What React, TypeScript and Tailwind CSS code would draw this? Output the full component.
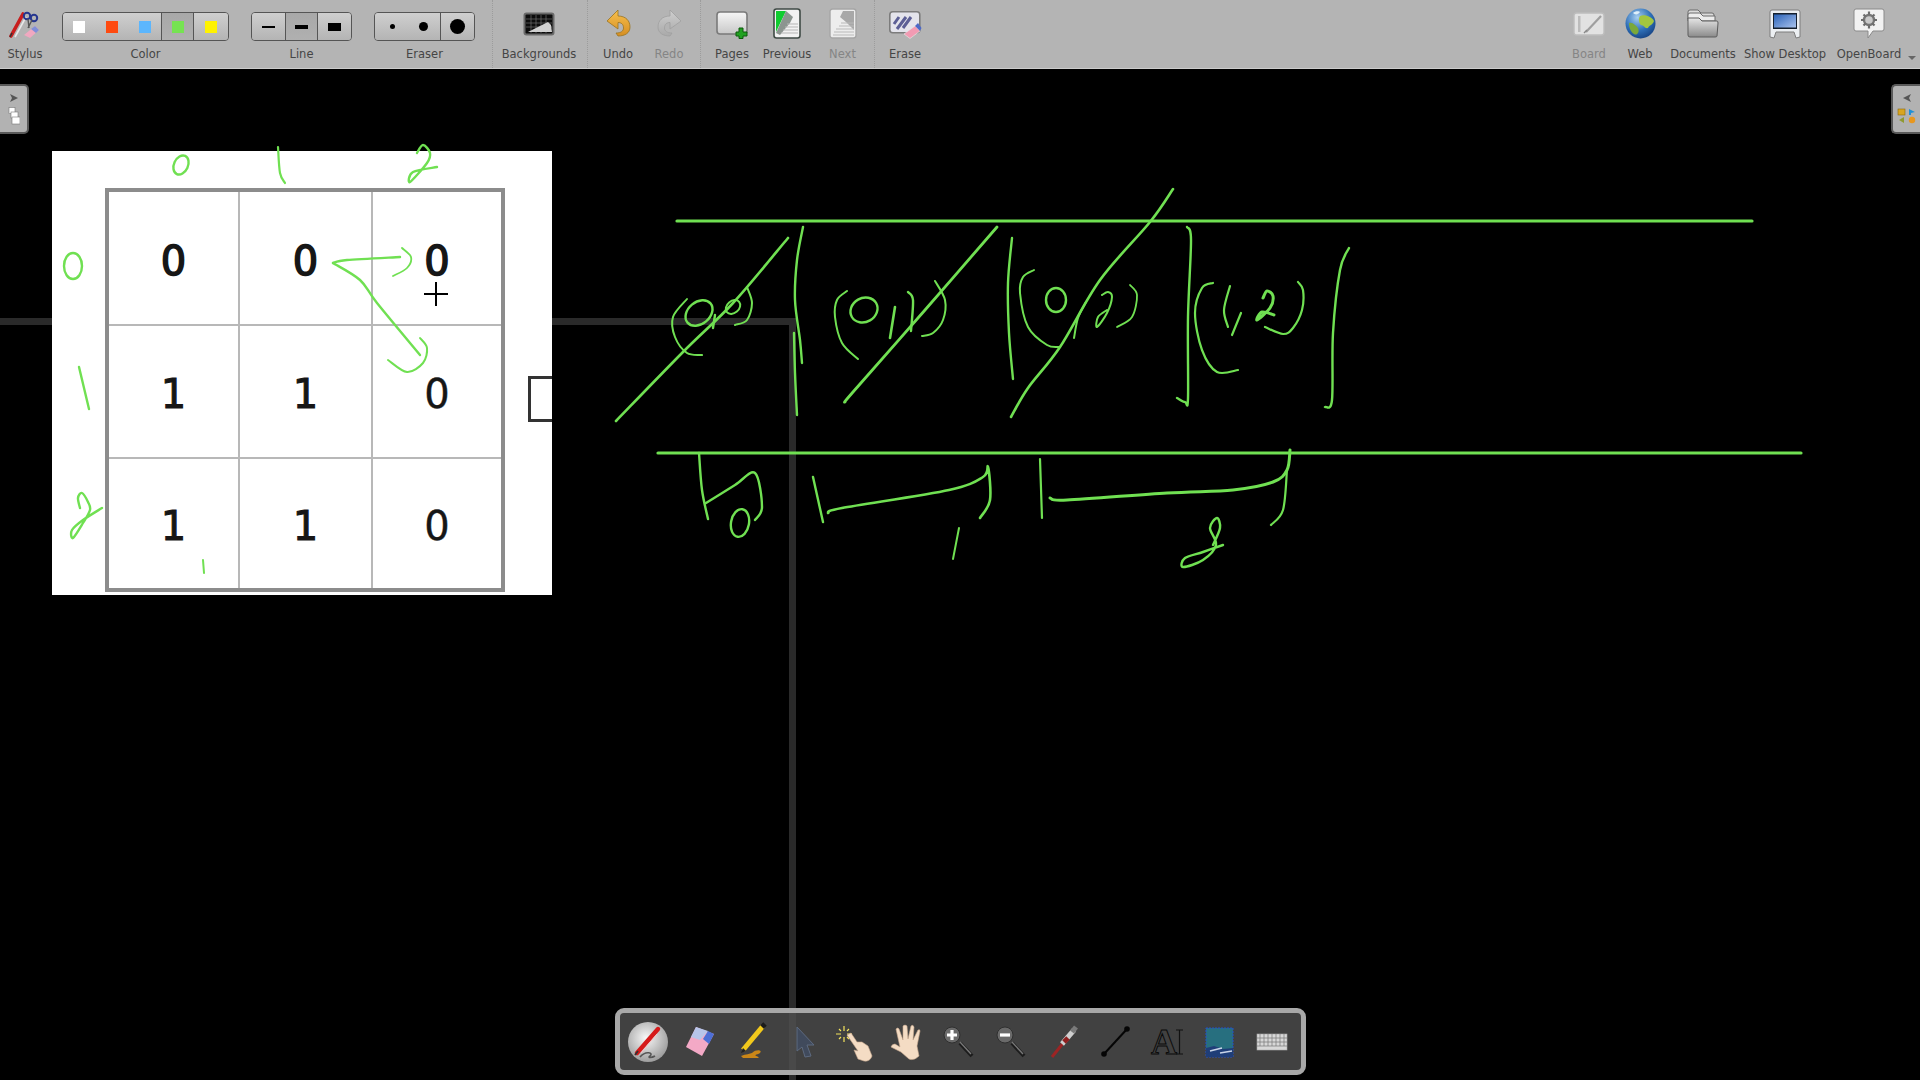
import React from "react";

type P = [number, number];
const smooth = (p: P[]) => {
  let d = `M${p[0][0]} ${p[0][1]}`;
  for (let i = 0; i < p.length - 1; i++) {
    const a = p[Math.max(i - 1, 0)], b = p[i], c = p[i + 1], e = p[Math.min(i + 2, p.length - 1)];
    d += ` C${b[0] + (c[0] - a[0]) / 6} ${b[1] + (c[1] - a[1]) / 6} ${c[0] - (e[0] - b[0]) / 6} ${c[1] - (e[1] - b[1]) / 6} ${c[0]} ${c[1]}`;
  }
  return d;
};

const strokes: [P[], number][] = [
  [[[677, 221], [1752, 221]], 3.2],
  [[[658, 453], [1801, 453]], 3.2],
  [[[616, 421], [683, 352], [733, 303], [788, 238]], 2.6],
  [[[803, 227], [797, 260], [795, 300], [800, 340], [802, 363]], 2.4],
  [[[794, 333], [795, 373], [797, 415]], 2.4],
  [[[687, 299], [673, 317], [675, 337], [687, 353], [702, 355]], 2],
  [[[715, 315], [713, 328]], 2.4],
  [[[747, 287], [752, 303], [747, 320], [735, 325]], 2],
  [[[845, 402], [853, 392], [925, 310], [997, 227]], 2.8],
  [[[847, 291], [837, 300], [835, 317], [842, 343], [858, 359]], 2],
  [[[895, 307], [890, 338]], 2.6],
  [[[908, 292], [913, 300], [911, 331]], 2.4],
  [[[935, 281], [945, 300], [943, 320], [933, 333], [922, 336]], 2],
  [[[1012, 238], [1008, 283], [1009, 333], [1013, 379]], 2.4],
  [[[1034, 270], [1023, 277], [1020, 293], [1028, 327], [1047, 345], [1060, 347]], 2],
  [[[1011, 417], [1028, 388], [1060, 347], [1100, 280], [1150, 222], [1173, 189]], 2.6],
  [[[1086, 302], [1078, 318], [1074, 338]], 2],
  [[[1102, 295], [1108, 292], [1112, 297], [1107, 313], [1097, 327], [1098, 317], [1107, 310]], 2],
  [[[1130, 285], [1137, 295], [1132, 317], [1117, 327]], 1.8],
  [[[1187, 227], [1191, 240], [1188, 317], [1188, 398], [1185, 402], [1177, 398]], 2.4],
  [[[1213, 283], [1202, 288], [1195, 313], [1202, 350], [1217, 372], [1238, 370]], 2.2],
  [[[1230, 286], [1224, 310], [1228, 327]], 2.2],
  [[[1241, 313], [1232, 335]], 2.2],
  [[[1263, 298], [1267, 291], [1273, 296], [1270, 308], [1257, 320], [1262, 312], [1274, 315]], 3],
  [[[1298, 282], [1303, 290], [1302, 310], [1293, 328], [1283, 334], [1265, 327]], 2.2],
  [[[1349, 248], [1340, 270], [1333, 333], [1332, 400], [1325, 407]], 2.4],
  [[[699, 453], [702, 490], [708, 519]], 2.4],
  [[[706, 503], [735, 485], [755, 473], [762, 507], [755, 520]], 2.4],
  [[[813, 477], [823, 522]], 2.4],
  [[[828, 513], [842, 508], [949, 490], [983, 477], [988, 467], [990, 500], [980, 518]], 2.6],
  [[[959, 528], [953, 559]], 2],
  [[[1040, 459], [1042, 518]], 2.2],
  [[[1050, 498], [1067, 500], [1167, 493], [1233, 490], [1273, 482], [1287, 470], [1290, 450]], 3],
  [[[1287, 470], [1283, 510], [1271, 525]], 2.2],
  [[[1213, 545], [1220, 528], [1217, 518], [1210, 528], [1216, 545], [1203, 560], [1183, 567], [1185, 558], [1203, 552], [1223, 545]], 2.4],
  [[[278, 147], [280, 173], [285, 183]], 2.2],
  [[[417, 153], [423, 145], [430, 153], [427, 163], [410, 182], [413, 172], [437, 167]], 2.4],
  [[[79, 367], [89, 409]], 2.4],
  [[[80, 508], [78, 498], [82, 493], [88, 502], [90, 510], [83, 523], [73, 538], [72, 530], [83, 520], [102, 508]], 2.4],
  [[[203, 560], [204, 573]], 2],
  [[[333, 263], [347, 260], [400, 257]], 2.4],
  [[[402, 248], [411, 257], [407, 268], [393, 276]], 1.8],
  [[[333, 263], [360, 280], [377, 303], [420, 355]], 2.4],
  [[[420, 338], [427, 348], [423, 363], [407, 372], [388, 360]], 2],
];

const ellipses: [number, number, number, number, number, number][] = [
  [699, 313, 15, 11, -40, 2.4],
  [733, 307, 8, 6, -40, 2],
  [864, 310, 14, 12, -30, 2.4],
  [1056, 300, 10, 12, 0, 2.4],
  [181, 165, 7, 10, 25, 2.4],
  [73, 266, 9, 13, 0, 2.4],
  [740, 523, 9, 14, 10, 2.4],
];

const Sketch = () => (
  <svg className="absolute left-0 top-0" width="1920" height="1080" fill="none" stroke="#70e052" strokeLinecap="round" strokeLinejoin="round">
    {strokes.map(([p, w], i) => <path key={i} d={smooth(p)} strokeWidth={w} />)}
    {ellipses.map(([x, y, rx, ry, r, w], i) => (
      <ellipse key={i} cx={x} cy={y} rx={rx} ry={ry} strokeWidth={w} transform={`rotate(${r} ${x} ${y})`} />
    ))}
    <path d="M436 282V306M424 294H448" stroke="#000" strokeWidth="2" strokeLinecap="butt" />
  </svg>
);

const Item = ({ w, label, dim, children }: { w: string; label: string; dim?: boolean; children?: React.ReactNode }) => (
  <div className={`${w} flex flex-col items-center pt-[6px] shrink-0`}>
    <div className="h-[35px] flex items-center justify-center">{children}</div>
    <div className={`mt-[6px] h-[14px] leading-[14px] text-[11.5px] whitespace-nowrap ${dim ? "text-[#858585]" : "text-[#454545]"}`}>{label}</div>
  </div>
);

const Group = ({ w, ml, label, children }: { w: string; ml: string; label: string; children: React.ReactNode }) => (
  <div className={`${w} ${ml} flex flex-col items-center shrink-0`}>
    <div className="w-full h-[29px] mt-[12px] flex rounded-[4px] border border-[#555] overflow-hidden">{children}</div>
    <div className="mt-[6px] h-[14px] leading-[14px] text-[11.5px] text-[#454545]">{label}</div>
  </div>
);

const seg = "flex items-center justify-center bg-gradient-to-b from-[#cfcfcf] to-[#b4b4b4]";
const segSel = "flex items-center justify-center bg-gradient-to-b from-[#a8a8a8] to-[#b0b0b0]";

const Sep = ({ ml }: { ml: string }) => <div className={`${ml} w-px h-[68px] shrink-0 border-l border-dotted border-[#9c9c9c]`} />;

const StylusIcon = () => (
  <svg width="32" height="30" viewBox="0 0 32 30">
    <path d="M2 27 L14 5" stroke="#c81e1e" strokeWidth="3.6" strokeLinecap="round" />
    <path d="M6 28 L17 8" stroke="#e8e8e8" strokeWidth="1.6" />
    <path d="M1 28 L3 24" stroke="#333" strokeWidth="1.6" />
    <circle cx="18" cy="7" r="3.2" fill="none" stroke="#26368f" strokeWidth="2" />
    <circle cx="25" cy="9" r="3.2" fill="none" stroke="#26368f" strokeWidth="2" />
    <path d="M19 10 L20 19 M23 11 L19 19" stroke="#555" strokeWidth="1.4" />
    <path d="M15 26 L26 17 L30 21 L21 29 Z" fill="#f0a8c0" />
    <path d="M22 20 L26 17 L30 21 L27 24 Z" fill="#7f8fd8" />
  </svg>
);

const BackgroundsIcon = () => (
  <svg width="32" height="24" viewBox="0 0 32 24">
    <rect x="0.5" y="0.5" width="31" height="23" rx="3" fill="#6a6a6a" />
    <rect x="2.5" y="2.5" width="27" height="19" rx="1" fill="#0c0c0c" />
    <path d="M3 7H29M3 11H29M3 15H29M8 3V21M13 3V21M18 3V21M23 3V21" stroke="#6e6e6e" strokeWidth="0.7" />
    <path d="M5 20 L25 10 L28 13 L29 20 Z" fill="#d0d0d0" />
  </svg>
);

const ArrowIcon = ({ id, a, b, s, flip }: { id: string; a: string; b: string; s: string; flip?: boolean }) => (
  <svg width="25" height="28" viewBox="0 0 25 28" className="-mt-[2px]">
    <defs><linearGradient id={id} x1="0" y1="0" x2="0" y2="1"><stop offset="0" stopColor={a} /><stop offset="1" stopColor={b} /></linearGradient></defs>
    <g transform={flip ? "translate(25 0) scale(-1 1)" : undefined}>
      <path d="M1 12 L12 1 L12 7 C20 7 24 12 24 18 C24 24 19 27 12 27 L10 24 C15 24 17.5 22 17.5 19 C17.5 15 15 13.5 12 13.5 L12 20 Z" fill={`url(#${id})`} stroke={s} strokeWidth="0.8" />
    </g>
  </svg>
);

const PagesIcon = () => (
  <svg width="33" height="28" viewBox="0 0 33 28" className="mt-[3px]">
    <defs><linearGradient id="pg" x1="0" y1="0" x2="0" y2="1"><stop offset="0" stopColor="#f6f6f6" /><stop offset="1" stopColor="#c8c8c8" /></linearGradient></defs>
    <rect x="1" y="1" width="30" height="22" rx="3" fill="url(#pg)" stroke="#7a7a7a" strokeWidth="1.6" />
    <path d="M23 17H27V21H31V25H27V27.5H23V25H20V21H23Z" fill="#22a122" stroke="#0c5a0c" strokeWidth="1" />
  </svg>
);

const PreviousIcon = () => (
  <svg width="28" height="31" viewBox="0 0 28 31">
    <rect x="1" y="1" width="26" height="29" rx="2.5" fill="#f2f2f2" stroke="#3f4a45" strokeWidth="1.6" />
    <path d="M3 3H13L3 24Z" fill="#10cc30" />
    <path d="M13 3 L20 9 L17 15 L7 27 L3 25 Z" fill="#8c9590" />
    <path d="M14 16H25M12 19H25M10 22H25M8 25H25" stroke="#b5b5b5" strokeWidth="1" />
  </svg>
);

const NextIcon = () => (
  <svg width="28" height="31" viewBox="0 0 28 31">
    <rect x="1" y="1" width="26" height="29" rx="2.5" fill="#ededed" stroke="#a6a6a6" strokeWidth="1.4" />
    <path d="M14 3H25V22 L17 14 L11 9 Z" fill="#a8a8a8" />
    <path d="M12 15H25M10 18H25M7 21H25M5 24H25M4 27H25" stroke="#b9b9b9" strokeWidth="1" />
  </svg>
);

const EraseIcon = () => (
  <svg width="33" height="28" viewBox="0 0 33 28" className="mt-[3px]">
    <rect x="0.8" y="0.8" width="30" height="21" rx="3" fill="#e4e4ec" stroke="#7c7c7c" strokeWidth="1.6" />
    <path d="M5 13 L10 6 M8 18 L17 6 M14 17 L22 6" stroke="#5c5f96" strokeWidth="3" />
    <path d="M15 23 L26 15 L31 20 L21 27.5 Z" fill="#f29bb3" stroke="#e9e9e9" strokeWidth="0.6" />
    <path d="M26 15 L29 12 L32.5 17 L31 20 Z" fill="#4d69c6" />
  </svg>
);

const BoardIcon = () => (
  <svg width="32" height="24" viewBox="0 0 32 24">
    <rect x="1" y="1" width="30" height="22" rx="2.5" fill="#e2e2e2" stroke="#bdbdbd" strokeWidth="1.4" />
    <rect x="5" y="4" width="2.5" height="16" fill="#bcbcbc" />
    <path d="M13 20 L28 4" stroke="#9f9f9f" strokeWidth="2.2" />
    <path d="M11 21 L14 18" stroke="#888" strokeWidth="1.4" />
  </svg>
);

const WebIcon = () => (
  <svg width="31" height="31" viewBox="0 0 31 31">
    <defs><radialGradient id="gl" cx="0.4" cy="0.3" r="0.8"><stop offset="0" stopColor="#a8cff0" /><stop offset="0.55" stopColor="#2e6fb8" /><stop offset="1" stopColor="#123a78" /></radialGradient></defs>
    <circle cx="15.5" cy="15.5" r="15" fill="url(#gl)" />
    <path d="M15 8 C20 6 27 9 29 13 C28 17 24 17 23 20 C20 21 19 17 16 17 C14 15 13 11 15 8Z" fill="#a2c640" />
    <path d="M4 15 C8 14 11 18 13 20 C15 24 12 28 9 26 C6 24 4 20 4 15Z" fill="#7aa83a" />
    <path d="M8 5 C10 3 14 3 15 4 C13 7 10 7 8 5Z" fill="#dfeffa" />
  </svg>
);

const DocumentsIcon = () => (
  <svg width="32" height="29" viewBox="0 0 32 29">
    <defs><linearGradient id="fd" x1="0" y1="0" x2="0" y2="1"><stop offset="0" stopColor="#e6e6e6" /><stop offset="1" stopColor="#8a8a8a" /></linearGradient></defs>
    <path d="M1 3 Q1 1 3 1 H11 L14 4 H25 Q27 4 27 6 V10 H1Z" fill="#dcdcdc" stroke="#6a6a6a" />
    <path d="M1 6 Q1 4 3 4 H13 L16 7 H28 V12 H1Z" fill="#ececec" stroke="#6a6a6a" />
    <path d="M1 9 H12 L15 12 H30 Q31 12 31 14 L30 27 Q30 28 28 28 H3 Q1 28 1 26Z" fill="url(#fd)" stroke="#5c5c5c" />
  </svg>
);

const DesktopIcon = () => (
  <svg width="32" height="30" viewBox="0 0 32 30">
    <defs><linearGradient id="ds" x1="0" y1="0" x2="1" y2="1"><stop offset="0" stopColor="#2a62b8" /><stop offset="1" stopColor="#a9c3ee" /></linearGradient></defs>
    <path d="M3 1 H29 Q31 1 31 3 V28 L27 29 L25 23 H7 L5 29 L1 28 V3 Q1 1 3 1Z" fill="#eceff2" stroke="#7d7d7d" />
    <rect x="4" y="4" width="24" height="16" fill="#15202e" />
    <rect x="5" y="5.5" width="22" height="13" fill="url(#ds)" />
  </svg>
);

const OpenBoardIcon = () => (
  <svg width="32" height="31" viewBox="0 0 32 31">
    <path d="M3 1 H29 Q31 1 31 3 V21 Q31 23 29 23 H20 L15 30 L15 23 H3 Q1 23 1 21 V3 Q1 1 3 1Z" fill="#f2f2f2" stroke="#8a8a8a" />
    <circle cx="16" cy="12" r="5" fill="#c9c9c9" stroke="#767676" strokeWidth="2.4" />
    <path d="M16 3.5V6.5M16 17.5V20.5M8 12H11M21 12H24M10.5 6.5L12.5 8.5M19.5 15.5L21.5 17.5M21.5 6.5L19.5 8.5M12.5 15.5L10.5 17.5" stroke="#6d6d6d" strokeWidth="2.2" />
  </svg>
);

const LeftTab = () => (
  <div className="absolute left-0 top-[15px] w-[29px] h-[50px] bg-[#b2b2b2] border-2 border-l-0 border-[#5a5a5a] rounded-r-[5px] flex flex-col items-center gap-[4px] pt-[7px]">
    <svg width="10" height="10" viewBox="0 0 10 10"><path d="M1 1 L9 5 L1 9 L3 5Z" fill="#555" /></svg>
    <svg width="12" height="18" viewBox="0 0 12 18">
      <rect x="1" y="0.5" width="6" height="6" fill="#fff" stroke="#777" strokeWidth="0.6" />
      <rect x="3" y="5" width="7" height="6" fill="#fff" stroke="#777" strokeWidth="0.6" />
      <rect x="4" y="10" width="8" height="7" fill="#fff" stroke="#777" strokeWidth="0.6" />
    </svg>
  </div>
);

const RightTab = () => (
  <div className="absolute right-0 top-[15px] w-[29px] h-[50px] bg-[#b2b2b2] border-2 border-r-0 border-[#5a5a5a] rounded-l-[5px] flex flex-col items-center gap-[5px] pt-[7px]">
    <svg width="10" height="10" viewBox="0 0 10 10"><path d="M9 1 L1 5 L9 9 L7 5Z" fill="#555" /></svg>
    <svg width="20" height="16" viewBox="0 0 20 16">
      <rect x="1" y="1" width="7" height="6" fill="#d9a520" stroke="#8a6a10" strokeWidth="0.6" />
      <path d="M12 1 L18 4 L14 5 V7 H12Z" fill="#1e90d8" />
      <path d="M7 9 L2 12 L7 15Z" fill="#8f9a30" />
      <circle cx="15" cy="12" r="3.2" fill="#e8971e" />
    </svg>
  </div>
);

const Z = ({ minus }: { minus?: boolean }) => (
  <svg width="44" height="44" viewBox="0 0 44 44">
    <circle cx={minus ? 15 : 14} cy="15" r="8" fill="#6a6a6a" stroke="#2f2f2f" />
    <path d={minus ? "M10 15H20" : "M9 15H19M14 10V20"} stroke="#fff" strokeWidth="3.2" />
    <path d="M22 23 L34 36" stroke="#1c1c1c" strokeWidth="4" />
    <path d="M22 22 L33 34" stroke="#777" strokeWidth="1.4" />
  </svg>
);

const bottomIcons: React.ReactNode[] = [
  <svg key="a" width="44" height="44" viewBox="0 0 44 44">
    <defs><radialGradient id="bc" cx="0.45" cy="0.4" r="0.7"><stop offset="0" stopColor="#f8f8f8" /><stop offset="1" stopColor="#8f8f8f" /></radialGradient></defs>
    <circle cx="22" cy="22" r="20" fill="url(#bc)" />
    <path d="M11 33 L32 9" stroke="#d61a1a" strokeWidth="4.4" strokeLinecap="round" />
    <path d="M15 33 L31 14" stroke="#f3c6c6" strokeWidth="1" />
    <path d="M9 35 L12 31" stroke="#333" strokeWidth="1.8" />
    <path d="M14 37 C20 30 28 33 24 36 C21 38 26 38 29 36" stroke="#555" strokeWidth="1.6" fill="none" />
  </svg>,
  <svg key="b" width="44" height="44" viewBox="0 0 44 44">
    <path d="M8 27 L18 7 L36 14 L24 36 Z" fill="#f3a9c6" />
    <path d="M18 7 L30 11 L22 20 L13 17 Z" fill="#b7c5ea" />
    <path d="M30 11 L36 14 L31 24 L25 19 Z" fill="#4d6fd6" />
  </svg>,
  <svg key="c" width="44" height="44" viewBox="0 0 44 44">
    <path d="M13 30 L33 6" stroke="#f2c91c" strokeWidth="5" />
    <path d="M32 7 L35 4" stroke="#1b1b1b" strokeWidth="5" />
    <path d="M11 33 L13 28 L16 31Z" fill="#222" />
    <path d="M11 36 C16 34 20 34 22 33 C26 29 33 30 30 33 C28 35 24 34 26 36 C29 37 30 38 27 38 L13 38 Z" fill="#c98618" />
  </svg>,
  <svg key="d" width="44" height="44" viewBox="0 0 44 44">
    <path d="M15 7 L32 25 L25 25 L29 36 L23 37 L20 27 L15 31 Z" fill="#404a5c" stroke="#5d6a80" strokeWidth="1" />
  </svg>,
  <svg key="e" width="44" height="44" viewBox="0 0 44 44">
    <path d="M10 6V11M10 17V22M2 14H7M13 14H18M5 9L7 11M15 9L13 11M5 19L7 17M15 19L13 17" stroke="#f3e35c" strokeWidth="1.2" />
    <path d="M13 15 L17 13 L23 22 L28 22 L34 26 L38 36 Q36 42 30 41 L24 39 L20 30 L24 31 Z" fill="#f4dcc4" stroke="#c9a98f" strokeWidth="0.6" />
  </svg>,
  <svg key="f" width="44" height="44" viewBox="0 0 44 44">
    <path d="M14 27 L10 9 Q12 7 13 9 L17 20 L17 6 Q19 4 21 6 L22 19 L25 6 Q27 4 28 7 L27 20 L32 10 Q34 9 34 11 L31 26 L33 36 Q28 41 23 39 L15 32 L5 27 Q6 24 9 24Z" fill="#f4dcc4" stroke="#c9a98f" strokeWidth="0.6" />
  </svg>,
  <Z key="g" />,
  <Z key="h" minus />,
  <svg key="i" width="44" height="44" viewBox="0 0 44 44">
    <path d="M10 37 L22 22" stroke="#9c2424" strokeWidth="3" />
    <path d="M20 24 L32 10" stroke="#cfcfcf" strokeWidth="5" />
    <path d="M22 22 L26 18" stroke="#8e2020" strokeWidth="5" />
    <path d="M30 12 L34 7" stroke="#7a7a7a" strokeWidth="5" />
  </svg>,
  <svg key="j" width="44" height="44" viewBox="0 0 44 44">
    <path d="M10 34 L33 9" stroke="#050505" strokeWidth="2" />
    <circle cx="10" cy="34" r="2.8" fill="#050505" />
    <circle cx="33" cy="9" r="2.8" fill="#050505" />
  </svg>,
  <div key="k" className="relative w-[34px] h-[30px] flex items-center">
    <span className="text-[36px] leading-[30px] font-bold text-transparent [-webkit-text-stroke:1px_#0a0a0a] [font-family:'Liberation_Serif',serif]">A</span>
    <svg className="absolute right-[1px] top-[2px]" width="9" height="26" viewBox="0 0 9 26"><path d="M1 1H8M4.5 1V25M1 25H8" stroke="#111" strokeWidth="1.2" fill="none" /></svg>
  </div>,
  <svg key="l" width="44" height="44" viewBox="0 0 44 44">
    <rect x="8" y="8" width="27" height="29" fill="#276f7f" stroke="#2550c8" strokeWidth="1" strokeDasharray="2 1" />
    <path d="M8 37 L8 28 L16 26 L25 29 L35 28 L35 37Z" fill="#1f3e78" />
    <path d="M12 31 L24 28 M22 33 L34 31" stroke="#c8d4e8" strokeWidth="1.4" />
  </svg>,
  <svg key="m" width="44" height="44" viewBox="0 0 44 44">
    <rect x="7" y="14" width="30" height="16" fill="#d8d8d8" stroke="#aaa" strokeWidth="0.6" />
    <path d="M7 18H37M7 22H37M7 26H37M10 14V26M14 14V26M18 14V26M22 14V26M26 14V26M30 14V26M34 14V26" stroke="#777" strokeWidth="0.7" />
  </svg>,
];

const Cell = ({ weight, t, br, bb }: { weight: string; t: string; br?: boolean; bb?: boolean }) => (
  <div className={`flex items-center justify-center pt-[5px] text-[40px] leading-none text-[#161616] [font-family:'DejaVu_Sans',sans-serif] ${weight} ${br ? "border-r-2 border-r-[#b8b8b8]" : ""} ${bb ? "border-b-2 border-b-[#b8b8b8]" : ""}`}>{t}</div>
);

const heavy = "[-webkit-text-stroke:1.5px_#161616]";
const mid = "[-webkit-text-stroke:1px_#161616]";
const light = "[-webkit-text-stroke:0.4px_#161616]";

export default function App() {
  return (
    <div className="relative w-[1920px] h-[1080px] bg-black overflow-hidden flex flex-col [font-family:'DejaVu_Sans',sans-serif]">
      <header className="h-[69px] shrink-0 bg-[#b4b4b4] border-b border-[#cccccc] flex items-start">
        <Item w="w-[50px]" label="Stylus"><StylusIcon /></Item>
        <Group w="w-[167px]" ml="ml-[12px]" label="Color">
          <div className={`${seg} w-[99px] gap-[21px] border-r border-[#555]`}>
            <div className="w-[12px] h-[12px] bg-white" />
            <div className="w-[12px] h-[12px] bg-[#fe4a10]" />
            <div className="w-[12px] h-[12px] bg-[#5cb6fd]" />
          </div>
          <div className={`${segSel} w-[32px] border-r border-[#555]`}><div className="w-[12px] h-[12px] bg-[#76e352]" /></div>
          <div className={`${seg} flex-1`}><div className="w-[12px] h-[12px] bg-[#fff200]" /></div>
        </Group>
        <Group w="w-[101px]" ml="ml-[22px]" label="Line">
          <div className={`${seg} w-[34px] border-r border-[#555]`}><div className="w-[13px] h-[2px] bg-black" /></div>
          <div className={`${segSel} w-[32px] border-r border-[#555]`}><div className="w-[13px] h-[4px] bg-black" /></div>
          <div className={`${seg} flex-1`}><div className="w-[13px] h-[8px] bg-black" /></div>
        </Group>
        <Group w="w-[101px]" ml="ml-[22px]" label="Eraser">
          <div className={`${seg} w-[66px] gap-[24px] pl-[2px] border-r border-[#555]`}>
            <div className="w-[5px] h-[5px] rounded-full bg-black" />
            <div className="w-[9px] h-[9px] rounded-full bg-black" />
          </div>
          <div className={`${seg} flex-1`}><div className="w-[15px] h-[15px] rounded-full bg-black" /></div>
        </Group>
        <Sep ml="ml-[17px]" />
        <Item w="w-[92px]" label="Backgrounds"><BackgroundsIcon /></Item>
        <Sep ml="ml-[2px]" />
        <Item w="w-[60px]" label="Undo"><ArrowIcon id="un" a="#f7c04e" b="#d68e22" s="#9a7420" /></Item>
        <Item w="w-[42px]" label="Redo" dim><ArrowIcon id="re" a="#cfcfcf" b="#a9a9a9" s="#a0a0a0" flip /></Item>
        <Sep ml="ml-[10px]" />
        <Item w="w-[62px]" label="Pages"><PagesIcon /></Item>
        <Item w="w-[48px]" label="Previous"><PreviousIcon /></Item>
        <Item w="w-[63px]" label="Next" dim><NextIcon /></Item>
        <Sep ml="ml-0" />
        <Item w="w-[60px]" label="Erase"><EraseIcon /></Item>
        <div className="flex-1" />
        <Item w="w-[40px]" label="Board" dim><BoardIcon /></Item>
        <Item w="w-[62px]" label="Web"><WebIcon /></Item>
        <Item w="w-[64px]" label="Documents"><DocumentsIcon /></Item>
        <Item w="w-[100px]" label="Show Desktop"><DesktopIcon /></Item>
        <Item w="w-[68px]" label="OpenBoard"><OpenBoardIcon /></Item>
        <div className="w-[17px] h-full flex justify-center pt-[56px]">
          <div className="w-0 h-0 border-x-[4px] border-x-transparent border-t-[4px] border-t-[#666]" />
        </div>
      </header>

      <main className="relative flex-1">
        <div className="absolute left-0 top-[249px] w-[796px] h-[7px] bg-[#2a2a2a]" />
        <div className="absolute left-[789px] top-[249px] w-[7px] h-[762px] bg-[#2a2a2a]" />
        <div className="absolute left-[52px] top-[82px] w-[500px] h-[444px] bg-white pl-[53px] pt-[37px] overflow-hidden">
          <div className="grid grid-cols-[131px_133px_1fr] grid-rows-[134px_133px_1fr] w-[400px] h-[404px] border-4 border-[#8c8c8c]">
            <Cell weight={heavy} t="0" br bb /><Cell weight={heavy} t="0" br bb /><Cell weight={heavy} t="0" bb />
            <Cell weight={mid} t="1" br bb /><Cell weight={mid} t="1" br bb /><Cell weight={light} t="0" bb />
            <Cell weight={mid} t="1" br /><Cell weight={mid} t="1" br /><Cell weight={light} t="0" />
          </div>
          <div className="absolute left-[476px] top-[225px] w-[30px] h-[46px] border-[3px] border-[#333]" />
        </div>
        <LeftTab />
        <RightTab />
      </main>

      <Sketch />

      <div className="absolute left-[615px] top-[1008px] w-[691px] h-[67px] rounded-[9px] border-[5px] border-[#a8a8a8] bg-[#515151]/80 flex items-center pl-[2px]">
        {bottomIcons.map((ic, i) => (
          <div key={i} className="w-[52px] h-[52px] flex items-center justify-center shrink-0">{ic}</div>
        ))}
      </div>
    </div>
  );
}
